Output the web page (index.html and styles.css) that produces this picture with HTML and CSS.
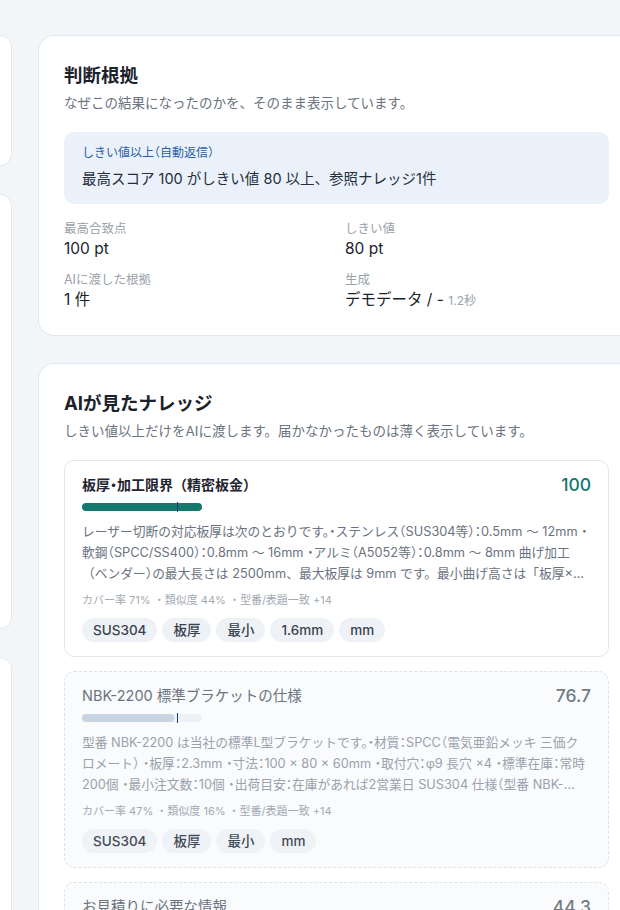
FILE: index.html
```html
<!DOCTYPE html>
<html lang="ja">
<head>
<meta charset="utf-8">
<link rel="stylesheet" href="styles.css">
</head>
<body>
<div class="page">
  <div class="side">
    <div class="side-card h1"></div>
    <div class="side-card h2"></div>
    <div class="side-card h3"></div>
  </div>
  <div class="main">
    <section class="card">
      <h2 class="card-title">判断根拠</h2>
      <p class="card-sub">なぜこの結果になったのかを、そのまま表示しています。</p>
      <div class="verdict">
        <div class="verdict-label">しきい値以上<span class="h">（</span>自動返信<span class="h">）</span></div>
        <div class="verdict-text">最高スコア 100 がしきい値 80 以上、参照ナレッジ1件</div>
      </div>
      <div class="stats">
        <div class="stat"><div class="stat-label">最高合致点</div><div class="stat-value">100 pt</div></div>
        <div class="stat"><div class="stat-label">しきい値</div><div class="stat-value">80 pt</div></div>
        <div class="stat"><div class="stat-label">AIに渡した根拠</div><div class="stat-value">1 件</div></div>
        <div class="stat"><div class="stat-label">生成</div><div class="stat-value">デモデータ / - <span class="stat-note">1.2秒</span></div></div>
      </div>
    </section>

    <section class="card">
      <h2 class="card-title">AIが見たナレッジ</h2>
      <p class="card-sub">しきい値以上だけをAIに渡します。届かなかったものは薄く表示しています。</p>
      <div class="items">
        <article class="item">
          <div class="item-head">
            <h3 class="item-title">板厚<span class="h">・</span>加工限界（精密板金）</h3>
            <span class="item-score">100</span>
          </div>
          <div class="bar"><div class="bar-fill" style="width:100%"></div><span class="bar-tick"></span></div>
          <p class="item-desc">レーザー切断の対応板厚は次のとおりです。<span class="h">・</span>ステンレス<span class="h">（</span>SUS304等<span class="h">）：</span>0.5mm 〜 12mm <span class="h">・</span>軟鋼<span class="h">（</span>SPCC/SS400<span class="h">）：</span>0.8mm 〜 16mm <span class="h">・</span>アルミ<span class="h">（</span>A5052等<span class="h">）：</span>0.8mm 〜 8mm 曲げ加工（ベンダー<span class="h">）</span>の最大長さは 2500mm、最大板厚は 9mm です。最小曲げ高さは「板厚×3＋1mm」が目安です。</p>
          <div class="item-meta">カバー率 71% ・類似度 44% ・型番/表題一致 +14</div>
          <div class="tags"><span class="tag">SUS304</span><span class="tag">板厚</span><span class="tag">最小</span><span class="tag">1.6mm</span><span class="tag">mm</span></div>
        </article>

        <article class="item faded">
          <div class="item-head">
            <h3 class="item-title">NBK-2200 標準ブラケットの仕様</h3>
            <span class="item-score">76.7</span>
          </div>
          <div class="bar"><div class="bar-fill" style="width:76.7%"></div><span class="bar-tick"></span></div>
          <p class="item-desc">型番 NBK-2200 は当社の標準L型ブラケットです。<span class="h">・</span>材質<span class="h">：</span>SPCC<span class="h">（</span>電気亜鉛メッキ 三価クロメート<span class="h">）</span> <span class="h">・</span>板厚<span class="h">：</span>2.3mm <span class="h">・</span>寸法<span class="h">：</span>100 × 80 × 60mm <span class="h">・</span>取付穴<span class="h">：</span>φ9 長穴 ×4 <span class="h">・</span>標準在庫<span class="h">：</span>常時200個 <span class="h">・</span>最小注文数<span class="h">：</span>10個 <span class="h">・</span>出荷目安<span class="h">：</span>在庫があれば2営業日 SUS304 仕様<span class="h">（</span>型番 NBK-2200S<span class="h">）</span>もございます。</p>
          <div class="item-meta">カバー率 47% ・類似度 16% ・型番/表題一致 +14</div>
          <div class="tags"><span class="tag">SUS304</span><span class="tag">板厚</span><span class="tag">最小</span><span class="tag">mm</span></div>
        </article>

        <article class="item faded">
          <div class="item-head">
            <h3 class="item-title">お見積りに必要な情報</h3>
            <span class="item-score">44.3</span>
          </div>
          <div class="bar"><div class="bar-fill" style="width:44.3%"></div><span class="bar-tick"></span></div>
          <p class="item-desc">お見積りには図面、材質、板厚、数量、希望納期をお知らせください。</p>
        </article>
      </div>
    </section>
  </div>
</div>
</body>
</html>
```

FILE: styles.css
```css
html, body {
  margin: 0;
  padding: 0;
  overflow: hidden;
  background: #f3f6f9;
}

body {
  font-family: "Inter", "Noto Sans CJK JP", sans-serif;
  color: #1f2630;
}

.h {
  font-feature-settings: "halt";
}

.page {
  display: grid;
  grid-template-columns: 12px 596px;
  column-gap: 26px;
  padding-top: 35px;
  width: 634px;
}

.side {
  display: flex;
  flex-direction: column;
  gap: 28px;
}

.side-card {
  background: #ffffff;
  border: 1px solid #e4e8ed;
  border-left: none;
  border-radius: 0 16px 16px 0;
}

.side-card.h1 { height: 129px; }
.side-card.h2 { height: 433px; }
.side-card.h3 { height: 400px; }

.main {
  display: flex;
  flex-direction: column;
  gap: 27px;
}

.card {
  background: #ffffff;
  border: 1px solid #e4e8ed;
  border-right: none;
  border-radius: 16px 0 0 16px;
  padding: 26px 25px 24px 25px;
}

.card-title {
  margin: 0;
  font-size: 18.5px;
  line-height: 26px;
  font-weight: 700;
  color: #1b222c;
}

.card-sub {
  margin: 4px 0 0;
  font-size: 13.5px;
  line-height: 22px;
  color: #6b7380;
}

.verdict {
  margin-top: 18px;
  background: #eaf1fb;
  border-radius: 10px;
  padding: 12px 18px 14px;
}

.verdict-label {
  font-size: 12px;
  line-height: 18px;
  color: #2a5fa8;
}

.verdict-text {
  margin-top: 6px;
  font-size: 14.5px;
  line-height: 22px;
  color: #262e38;
}

.stats {
  margin-top: 16px;
  display: grid;
  grid-template-columns: 281px 1fr;
  row-gap: 12px;
}

.stat-label {
  font-size: 12.5px;
  line-height: 18px;
  color: #9aa1ab;
}

.stat-value {
  font-size: 15.5px;
  line-height: 21px;
  color: #1b222c;
  font-weight: 400;
}

.stat-note {
  font-size: 12px;
  color: #9aa1ab;
}

.items {
  margin-top: 18px;
  display: flex;
  flex-direction: column;
  gap: 14px;
}

.item {
  background: #ffffff;
  border: 1px solid #e3e7ec;
  border-radius: 10px;
  padding: 14px 17px 14px;
}

.item.faded {
  background: #f9fbfc;
  border: 1px dashed #dde2e8;
}

.item-head {
  display: flex;
  justify-content: space-between;
  align-items: center;
}

.item-title {
  margin: 0;
  font-size: 14px;
  line-height: 20px;
  font-weight: 700;
  color: #1f2630;
}

.item-score {
  font-size: 17.5px;
  line-height: 20px;
  font-weight: 500;
  color: #12786c;
}

.faded .item-title {
  font-size: 14.5px;
  font-weight: 400;
  color: #6b7380;
}

.faded .item-score {
  color: #737b86;
}

.bar {
  position: relative;
  margin-top: 8px;
  width: 120px;
  height: 8px;
  border-radius: 4px;
  background: #eef2f6;
}

.bar-fill {
  height: 100%;
  border-radius: 4px;
  background: #15786c;
}

.faded .bar-fill {
  background: #c9d4e1;
}

.bar-tick {
  position: absolute;
  left: 95px;
  top: -1px;
  width: 1px;
  height: 10px;
  background: #1e3f66;
}

.item-desc {
  margin: 10px 0 0;
  font-size: 12.75px;
  line-height: 21px;
  color: #6b7380;
  display: -webkit-box;
  -webkit-line-clamp: 3;
  -webkit-box-orient: vertical;
  overflow: hidden;
}

.faded .item-desc {
  color: #9aa2ac;
}

.item-meta {
  margin-top: 8px;
  font-size: 11px;
  line-height: 16px;
  color: #a3aab3;
}

.tags {
  margin-top: 10px;
  display: flex;
  gap: 5px;
}

.tag {
  height: 24px;
  line-height: 24px;
  padding: 0 11px;
  border-radius: 12px;
  background: #eef2f6;
  font-size: 13.5px;
  font-weight: 500;
  color: #39424e;
}

.faded .tag {
  background: #eff2f6;
  color: #434c58;
}
```
